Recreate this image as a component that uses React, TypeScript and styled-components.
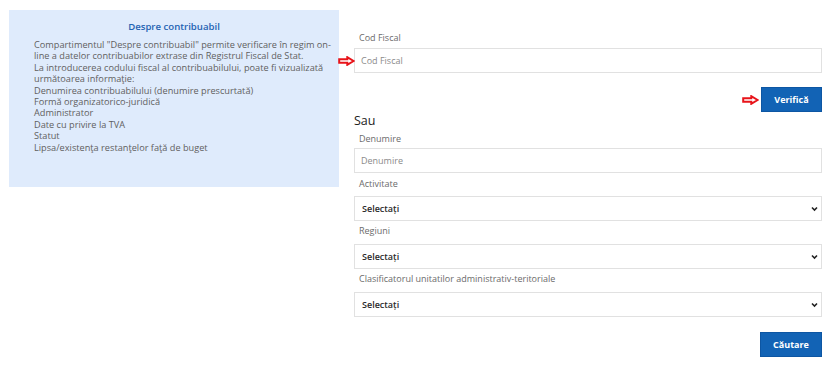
import React from "react";
import styled, { createGlobalStyle } from "styled-components";

const GlobalStyle = createGlobalStyle`
  html, body {
    margin: 0;
    padding: 0;
    background: #ffffff;
    font-family: "Open Sans", "Noto Sans", sans-serif;
  }
  * { box-sizing: border-box; }
`;

const Page = styled.div`
  display: grid;
  grid-template-columns: 330px 1fr;
  column-gap: 15px;
  align-items: start;
  padding: 10px 18px 10px 9px;
  width: 840px;
`;

const InfoPanel = styled.aside`
  background: #dfebfc;
  height: 177px;
  padding: 11px 25px 0 25px;
  color: #5f5f5f;
  font-size: 9.2px;
  line-height: 11.4px;
`;

const PanelTitle = styled.h3`
  margin: 0 0 6px 0;
  text-align: center;
  color: #2563b3;
  font-size: 9.6px;
  font-weight: 600;
  line-height: 12px;
`;

const Line = styled.div`
  white-space: nowrap;
`;

const Form = styled.section`
  display: flex;
  flex-direction: column;
  padding-top: 21px;
`;

const Label = styled.label<{ $top?: number; $bottom?: number }>`
  display: block;
  margin-top: ${(p) => p.$top ?? 0}px;
  margin-bottom: ${(p) => p.$bottom ?? 3}px;
  padding-left: 5px;
  color: #6b6b6b;
  font-size: 9px;
  line-height: 14px;
`;

const ControlWrap = styled.div`
  position: relative;
`;

const TextInput = styled.input`
  display: block;
  width: 100%;
  height: 25px;
  border: 1px solid #e1e1e1;
  border-radius: 0;
  padding: 0 6px;
  font-family: inherit;
  font-size: 9px;
  color: #333;
  outline: none;
  &::placeholder {
    color: #8a8a8a;
  }
`;

const Select = styled.select`
  display: block;
  width: 100%;
  height: 25px;
  border: 1px solid #e1e1e1;
  border-radius: 0;
  padding: 0 7px;
  background: #fff;
  appearance: none;
  font-family: inherit;
  font-size: 9px;
  font-weight: 600;
  color: #2a2a2a;
  outline: none;
`;

const Chevron = styled.svg`
  position: absolute;
  right: 4px;
  top: 50%;
  margin-top: -3px;
  width: 7px;
  height: 6px;
  pointer-events: none;
`;

const Pointer = styled.svg<{ $left: number }>`
  position: absolute;
  left: ${(p) => p.$left}px;
  top: 50%;
  margin-top: -5px;
  width: 17px;
  height: 10px;
`;

const ButtonRow = styled.div<{ $top: number }>`
  position: relative;
  display: flex;
  justify-content: flex-end;
  margin-top: ${(p) => p.$top}px;
`;

const PrimaryButton = styled.button<{ $width: number }>`
  position: relative;
  width: ${(p) => p.$width}px;
  height: 25px;
  border: 1px solid #0d56a3;
  border-radius: 0;
  background: #1263b5;
  color: #ffffff;
  font-family: inherit;
  font-size: 9px;
  font-weight: 700;
  cursor: pointer;
`;

const Or = styled.div`
  margin-top: 1px;
  color: #222;
  font-size: 12.5px;
  line-height: 16px;
`;

const RedArrow = ({ left }: { left: number }) => (
  <Pointer $left={left} viewBox="0 0 17 10">
    <path
      d="M1.2 3.3 H9.3 V1.2 L15.6 5 L9.3 8.8 V6.7 H1.2 Z"
      fill="#ffffff"
      stroke="#e8141a"
      strokeWidth="2"
      strokeLinejoin="miter"
    />
  </Pointer>
);

const SelectField = () => (
  <ControlWrap>
    <Select defaultValue="">
      <option value="">Selectați</option>
    </Select>
    <Chevron viewBox="0 0 7 6">
      <path d="M1 1.5 L3.5 4 L6 1.5" fill="none" stroke="#222" strokeWidth="1.6" />
    </Chevron>
  </ControlWrap>
);

export default function App() {
  return (
    <>
      <GlobalStyle />
      <Page>
        <InfoPanel>
          <PanelTitle>Despre contribuabil</PanelTitle>
          <Line>Compartimentul "Despre contribuabil" permite verificare în regim on-</Line>
          <Line>line a datelor contribuabilor extrase din Registrul Fiscal de Stat.</Line>
          <Line>La introducerea codului fiscal al contribuabilului, poate fi vizualizată</Line>
          <Line>următoarea informaţie:</Line>
          <Line>Denumirea contribuabilului (denumire prescurtată)</Line>
          <Line>Formă organizatorico-juridică</Line>
          <Line>Administrator</Line>
          <Line>Date cu privire la TVA</Line>
          <Line>Statut</Line>
          <Line>Lipsa/existenţa restanţelor faţă de buget</Line>
        </InfoPanel>

        <Form>
          <Label>Cod Fiscal</Label>
          <ControlWrap>
            <RedArrow left={-16} />
            <TextInput placeholder="Cod Fiscal" />
          </ControlWrap>

          <ButtonRow $top={14}>
            <PrimaryButton $width={61}>
              <RedArrow left={-20} />
              Verifică
            </PrimaryButton>
          </ButtonRow>

          <Or>Sau</Or>
          <Label $top={3} $bottom={2}>Denumire</Label>
          <TextInput placeholder="Denumire" />

          <Label $top={4} $bottom={5}>Activitate</Label>
          <SelectField />

          <Label $top={3} $bottom={6}>Regiuni</Label>
          <SelectField />

          <Label $top={3} $bottom={6}>Clasificatorul unitatilor administrativ-teritoriale</Label>
          <SelectField />

          <ButtonRow $top={15}>
            <PrimaryButton $width={62}>Căutare</PrimaryButton>
          </ButtonRow>
        </Form>
      </Page>
    </>
  );
}
